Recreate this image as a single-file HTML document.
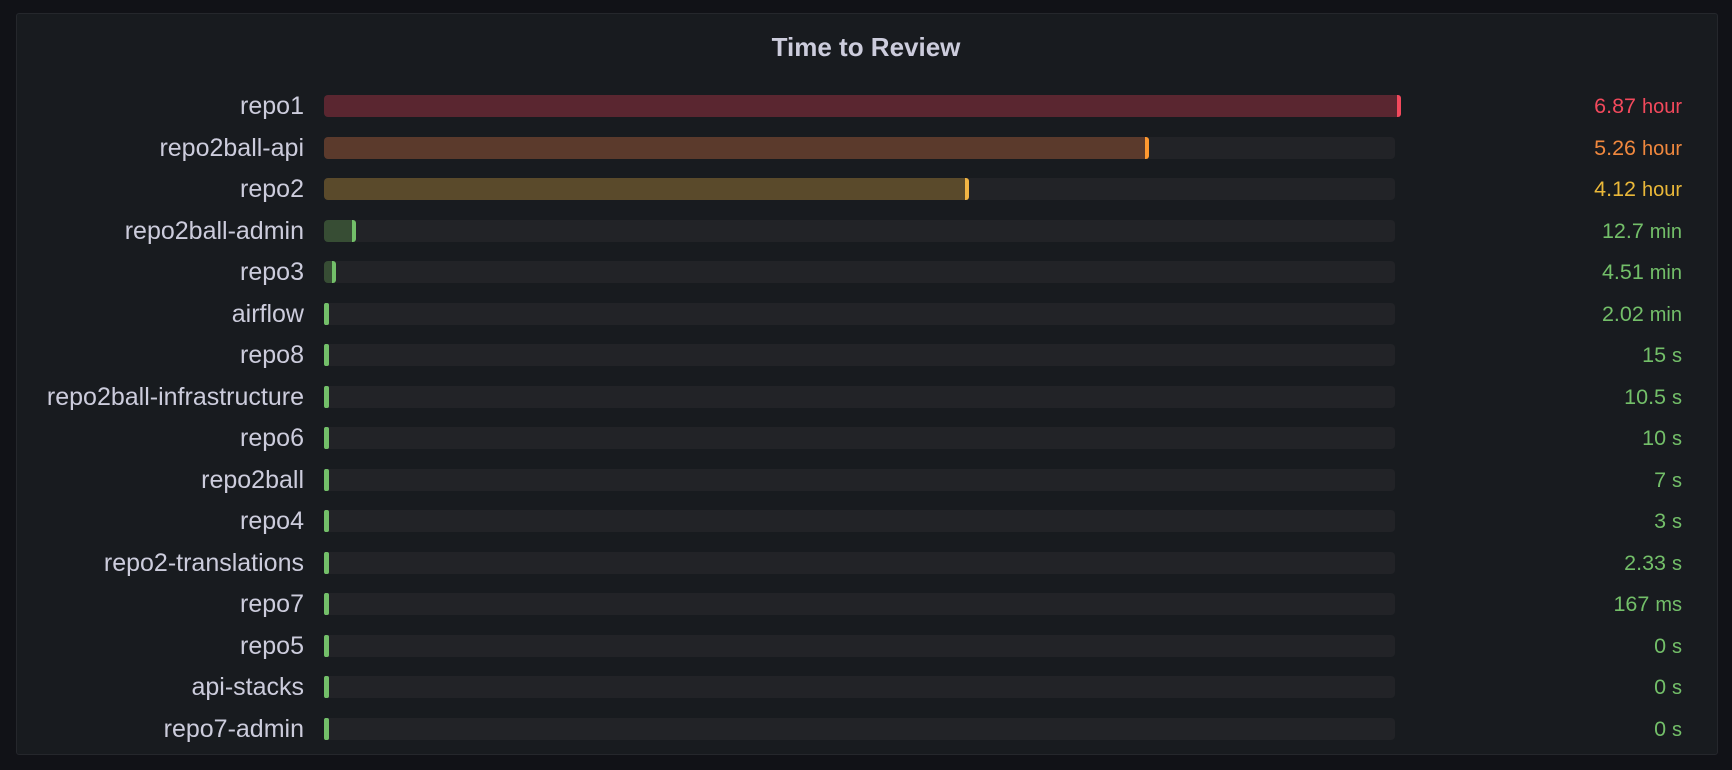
<!DOCTYPE html>
<html><head><meta charset="utf-8"><style>
body{margin:0;width:1732px;height:770px;background:#111217;font-family:"Liberation Sans",sans-serif;overflow:hidden;position:relative}
.panel{position:absolute;left:16px;top:13px;width:1702px;height:742px;background:#181b1f;border:1px solid #25272c;border-radius:3px;box-sizing:border-box}
.title{position:absolute;left:0;width:1732px;top:32px;text-align:center;color:#ccccdc;font-size:26px;font-weight:bold}
.lab{position:absolute;right:1428px;color:#ccccdc;font-size:25px;line-height:22px;white-space:nowrap}
.track{position:absolute;left:324px;width:1071px;height:22px;background:#222327;border-radius:4px}
.fill{position:absolute;left:324px;height:22px;border-radius:4px 3px 3px 4px;box-sizing:border-box}
.val{position:absolute;right:50px;font-size:21.5px;line-height:22px;white-space:nowrap}
</style></head><body>
<div class="panel"></div>
<div class="title">Time to Review</div>
<div id="rows"></div>
<script>
var d=[["repo1","6.87","hour",1077,"r"],["repo2ball-api","5.26","hour",825,"o"],["repo2","4.12","hour",645,"y"],["repo2ball-admin","12.7","min",32,"g"],["repo3","4.51","min",12,"g"],["airflow","2.02","min",5,"g"],["repo8","15","s",5,"g"],["repo2ball-infrastructure","10.5","s",5,"g"],["repo6","10","s",5,"g"],["repo2ball","7","s",5,"g"],["repo4","3","s",5,"g"],["repo2-translations","2.33","s",5,"g"],["repo7","167","ms",5,"g"],["repo5","0","s",5,"g"],["api-stacks","0","s",5,"g"],["repo7-admin","0","s",5,"g"]];
var C={r:["#5a2630","#f2495c","#f2495c"],o:["#5b3a2c","#ff9830","#f0883e"],y:["#5a4a2b","#f2b544","#eab839"],g:["#374d34","#73bf69","#73bf69"]};
var h="";
d.forEach(function(r,i){var y=95+i*41.53;var c=C[r[4]];
h+='<div class="lab" style="top:'+y+'px">'+r[0]+'</div>';
h+='<div class="track" style="top:'+y+'px"></div>';
h+='<div class="fill" style="top:'+y+'px;width:'+r[3]+'px;background:'+c[0]+';border-right:4px solid '+c[1]+(r[3]<10?';border-radius:2px;background:'+c[1]:'')+'"></div>';
h+='<div class="val" style="top:'+y+'px;color:'+c[2]+'">'+r[1]+' <span style="font-size:20px">'+r[2]+'</span></div>';});
document.getElementById("rows").innerHTML=h;
</script>
</body></html>
